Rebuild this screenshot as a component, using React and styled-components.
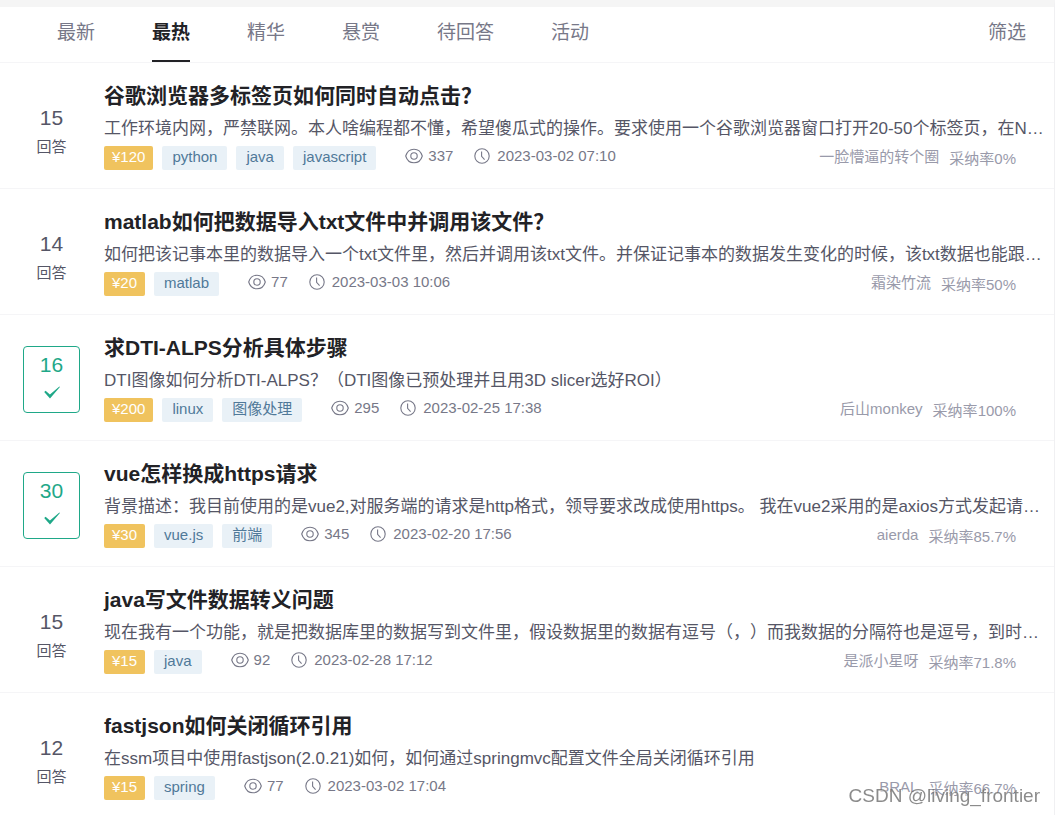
import React, { useState } from "react";
import styled, { createGlobalStyle, css } from "styled-components";

const GlobalStyle = createGlobalStyle`
  * {
    box-sizing: border-box;
  }

  body {
    margin: 0;
    background-color: #f5f6f7;
    font-family: "Liberation Sans", "Noto Sans CJK SC", sans-serif;
    color: #555666;
    text-spacing-trim: space-all;
  }
`;

const tabs = ["最新", "最热", "精华", "悬赏", "待回答", "活动"];

const questions = [
  {
    id: 1,
    answers: 15,
    title: "谷歌浏览器多标签页如何同时自动点击？",
    text: "工作环境内网，严禁联网。本人啥编程都不懂，希望傻瓜式的操作。要求使用一个谷歌浏览器窗口打开20-50个标签页，在N…",
    reward: 120,
    tags: ["python", "java", "javascript"],
    views: 337,
    date: "2023-03-02 07:10",
    author: "一脸懵逼的转个圈",
    rate: "0%",
  },
  {
    id: 2,
    answers: 14,
    title: "matlab如何把数据导入txt文件中并调用该文件？",
    text: "如何把该记事本里的数据导入一个txt文件里，然后并调用该txt文件。并保证记事本的数据发生变化的时候，该txt数据也能跟…",
    reward: 20,
    tags: ["matlab"],
    views: 77,
    date: "2023-03-03 10:06",
    author: "霜染竹流",
    rate: "50%",
  },
  {
    id: 3,
    answers: 16,
    solved: true,
    title: "求DTI-ALPS分析具体步骤",
    text: "DTI图像如何分析DTI-ALPS？（DTI图像已预处理并且用3D slicer选好ROI）",
    reward: 200,
    tags: ["linux", "图像处理"],
    views: 295,
    date: "2023-02-25 17:38",
    author: "后山monkey",
    rate: "100%",
  },
  {
    id: 4,
    answers: 30,
    solved: true,
    title: "vue怎样换成https请求",
    text: "背景描述：我目前使用的是vue2,对服务端的请求是http格式，领导要求改成使用https。 我在vue2采用的是axios方式发起请…",
    reward: 30,
    tags: ["vue.js", "前端"],
    views: 345,
    date: "2023-02-20 17:56",
    author: "aierda",
    rate: "85.7%",
  },
  {
    id: 5,
    answers: 15,
    title: "java写文件数据转义问题",
    text: "现在我有一个功能，就是把数据库里的数据写到文件里，假设数据里的数据有逗号（，）而我数据的分隔符也是逗号，到时…",
    reward: 15,
    tags: ["java"],
    views: 92,
    date: "2023-02-28 17:12",
    author: "是派小星呀",
    rate: "71.8%",
  },
  {
    id: 6,
    answers: 12,
    title: "fastjson如何关闭循环引用",
    text: "在ssm项目中使用fastjson(2.0.21)如何，如何通过springmvc配置文件全局关闭循环引用",
    reward: 15,
    tags: ["spring"],
    views: 77,
    date: "2023-03-02 17:04",
    author: "BRAL",
    rate: "66.7%",
  },
];

const EyeIcon = () => (
  <svg width="18" height="16" viewBox="0 0 18 16" fill="none" stroke="currentColor" strokeWidth="1.1">
    <path d="M0.7 8C2 3.6 5.2 1.2 9 1.2S16 3.6 17.3 8C16 12.4 12.8 14.8 9 14.8S2 12.4 0.7 8Z" />
    <circle cx="9" cy="8" r="3.2" />
  </svg>
);

const ClockIcon = () => (
  <svg width="16" height="16" viewBox="0 0 16 16" fill="none" stroke="currentColor" strokeWidth="1.1">
    <circle cx="8" cy="8" r="7.2" />
    <path d="M7.6 3.6V8.4L10.6 11.6" />
  </svg>
);

const CheckIcon = () => (
  <svg width="16" height="13" viewBox="0 0 16 13" fill="currentColor">
    <path d="M0.2 6L1.6 4.8L5.9 8.4L15.4 0.4L15.9 0.9L6 12.6Z" />
  </svg>
);

const Question = ({ item }) => (
  <Row>
    <Answers $solved={item.solved}>
      <Count>{item.answers}</Count>
      <CountLabel>{item.solved ? <CheckIcon /> : "回答"}</CountLabel>
    </Answers>
    <Content>
      <Title>
        <TitleLink href="#">{item.title}</TitleLink>
      </Title>
      <Text>{item.text}</Text>
      <Info>
        <Tags>
          <Reward>¥{item.reward}</Reward>
          {item.tags.map((tag) => (
            <Tag key={tag} href="#">
              {tag}
            </Tag>
          ))}
        </Tags>
        <Meta>
          <Stat $gap={5}>
            <EyeIcon />
            {item.views}
          </Stat>
          <Stat $gap={7}>
            <ClockIcon />
            {item.date}
          </Stat>
        </Meta>
        <User>
          <Author href="#">{item.author}</Author>
          <Rate>采纳率{item.rate}</Rate>
        </User>
      </Info>
    </Content>
  </Row>
);

const App = () => {
  const [active, setActive] = useState("最热");

  return (
    <>
      <GlobalStyle />
      <Page>
        <Header>
          <Tabs>
            {tabs.map((tab) => (
              <Tab key={tab} $active={tab === active} onClick={() => setActive(tab)}>
                {tab}
              </Tab>
            ))}
          </Tabs>
          <Tab>筛选</Tab>
        </Header>
        <List>
          {questions.map((item) => (
            <Question key={item.id} item={item} />
          ))}
        </List>
      </Page>
      <Watermark>CSDN @living_frontier</Watermark>
    </>
  );
};

export default App;

const Page = styled.main`
  background-color: #fff;
  border-top: 7px solid #f5f5f5;
  border-right: 1px solid #f0f0f2;
`;

const Header = styled.header`
  display: flex;
  justify-content: space-between;
  padding: 0 28px 0 57px;
  border-bottom: 1px solid #f5f5f7;
`;

const Tabs = styled.nav`
  display: flex;
  gap: 57px;
`;

const Tab = styled.button`
  height: 55px;
  padding: 0 0 1px;
  border: none;
  border-bottom: 2px solid transparent;
  background: none;
  font-family: inherit;
  font-size: 19px;
  line-height: 28px;
  color: #777888;
  cursor: pointer;

  ${({ $active }) =>
    $active &&
    css`
      font-weight: bold;
      color: #222226;
      border-bottom-color: #222226;
    `}
`;

const List = styled.ul`
  margin: 0;
  padding: 0;
  list-style: none;
`;

const Row = styled.li`
  display: flex;
  gap: 24px;
  padding: 17px 0 18px 23px;
  border-bottom: 1px solid #f5f5f7;
`;

const Answers = styled.div`
  flex: none;
  align-self: flex-start;
  width: 57px;
  margin-top: 14px;
  padding: 9px 0 0;
  border: 1px solid transparent;
  border-radius: 4px;
  text-align: center;

  ${({ $solved }) =>
    $solved &&
    css`
      padding: 4px 0 7px;
      border-color: #1fa888;
      color: #1fa888;
    `}
`;

const Count = styled.div`
  font-size: 21px;
  line-height: 28px;
`;

const CountLabel = styled.div`
  display: flex;
  align-items: center;
  justify-content: center;
  height: 26px;
  font-size: 15px;
`;

const Content = styled.div`
  flex: 1;
  min-width: 0;
`;

const Title = styled.h2`
  margin: 0;
  font-size: 21px;
  line-height: 32px;
`;

const TitleLink = styled.a`
  color: #222226;
  text-decoration: none;
`;

const Text = styled.p`
  margin: 5px 0;
  padding-right: 8px;
  overflow: hidden;
  font-size: 17px;
  line-height: 24px;
  white-space: nowrap;
  text-overflow: ellipsis;
`;

const Info = styled.div`
  display: flex;
  padding-right: 38px;
  font-size: 15px;
  line-height: 22px;
`;

const Tags = styled.div`
  display: flex;
  gap: 9px;
`;

const Reward = styled.span`
  height: 24px;
  padding: 0 8px;
  border-radius: 2px;
  background-color: #f0c35e;
  color: #fff;
`;

const Tag = styled.a`
  height: 24px;
  padding: 0 10px;
  border-radius: 2px;
  background-color: #e9f1f7;
  color: #507999;
  text-decoration: none;
`;

const Meta = styled.div`
  display: flex;
  gap: 21px;
  height: 20px;
  margin-left: 29px;
  color: #777888;
`;

const Stat = styled.span`
  display: flex;
  align-items: center;
  gap: ${({ $gap }) => $gap}px;
`;

const User = styled.div`
  display: flex;
  gap: 10px;
  margin-left: auto;
  color: #999aaa;
`;

const Author = styled.a`
  color: inherit;
  text-decoration: none;
`;

const Rate = styled.span`
  padding-top: 2px;
`;

const Watermark = styled.div`
  position: fixed;
  right: 15px;
  bottom: 7px;
  font-size: 19px;
  line-height: 24px;
  color: rgba(110, 110, 110, 0.8);
  text-shadow: 1px 1px 0 #fff;
  pointer-events: none;
`;
